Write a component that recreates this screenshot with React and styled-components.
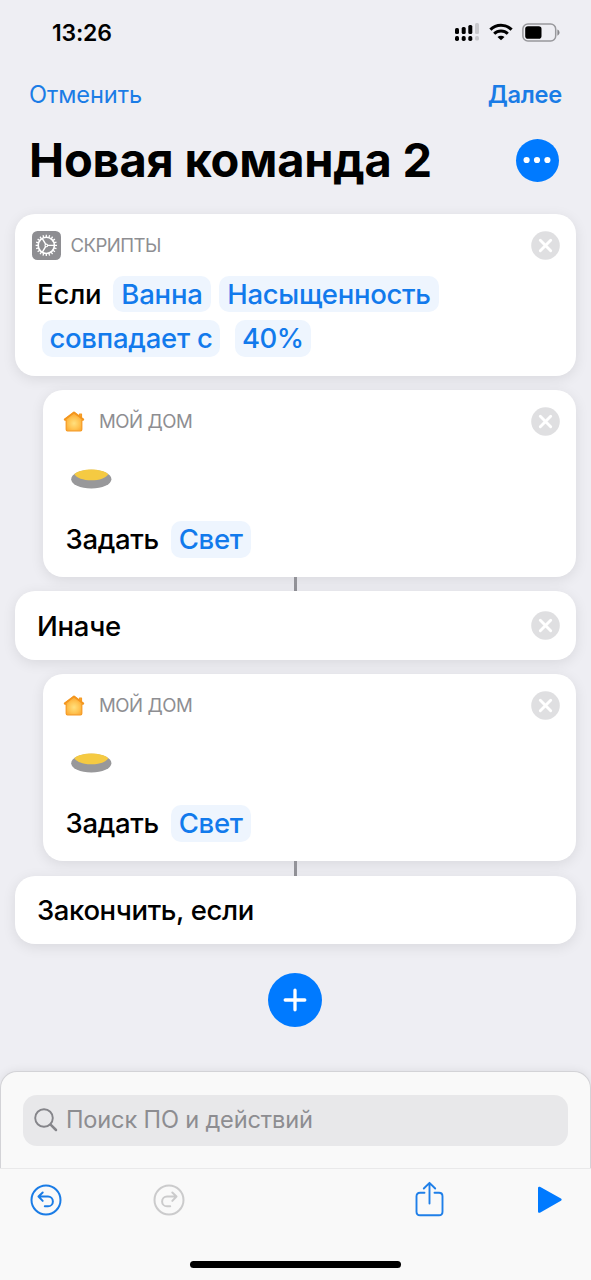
import React from 'react';
import styled, { createGlobalStyle, ThemeProvider } from 'styled-components';

const theme = {
  colors: {
    background: '#eeeef3',
    card: '#ffffff',
    blue: '#007aff',
    link: '#1a7ce6',
    chip: '#eef5fe',
    chipText: '#127aec',
    label: '#8e8e92',
    line: '#939399',
    panel: '#f9f9f9',
    search: '#e8e8ea',
    placeholder: '#8d8d91',
    disabled: '#cbcbcc',
  },
};

const GlobalStyle = createGlobalStyle`
  body {
    margin: 0;
    background-color: #eeeef3;
    font-family: Inter, "Liberation Sans", sans-serif;
    overflow: hidden;
  }
`;

const Screen = styled.div`
  display: flex;
  flex-direction: column;
  width: 591px;
  height: 1280px;
  background-color: ${props => props.theme.colors.background};
  overflow: hidden;
`;

const StatusBar = styled.header`
  display: flex;
  justify-content: space-between;
  align-items: center;
  height: 66px;
  padding: 0 31px 0 52px;
  box-sizing: border-box;
`;

const Text = styled.span`
  display: block;
  padding-top: ${props => props.$drop || 0}px;
  font-size: ${props => props.$size}px;
  font-weight: ${props => props.$weight || 400};
  letter-spacing: ${props => props.$spacing || 0}px;
  color: ${props => props.$color || '#000'};
  line-height: 1.2;
  white-space: nowrap;
`;

const StatusIcons = styled.div`
  display: flex;
  align-items: center;
  gap: 9px;
  padding-bottom: 2px;
`;

const NavBar = styled.nav`
  display: flex;
  justify-content: space-between;
  align-items: center;
  height: 58px;
  padding: 0 29px 0 29px;
`;

const TitleRow = styled.div`
  display: flex;
  justify-content: space-between;
  align-items: center;
  height: 72px;
  padding: 0 32.5px 0 29px;
`;

const Title = styled.h1`
  margin: 0;
  font-size: 47px;
  font-weight: 700;
  letter-spacing: -0.2px;
  line-height: 1.2;
  white-space: nowrap;
`;

const RoundButton = styled.button`
  display: flex;
  align-items: center;
  justify-content: center;
  width: ${props => props.$size}px;
  height: ${props => props.$size}px;
  flex-shrink: 0;
  padding: 0;
  border: none;
  border-radius: 50%;
  background-color: ${props => props.theme.colors.blue};
`;

const Flow = styled.main`
  display: flex;
  flex-direction: column;
  flex: 1;
  padding: 18px 15px 0;
`;

const Card = styled.section`
  display: flex;
  flex-direction: column;
  justify-content: ${props => (props.$single ? 'center' : 'flex-start')};
  height: ${props => props.$height}px;
  margin-left: ${props => (props.$nested ? 28 : 0)}px;
  padding: ${props => (props.$single ? '0 16.5px 0 22px' : '17px 16.5px 0')};
  box-sizing: border-box;
  border-radius: 20px;
  background-color: ${props => props.theme.colors.card};
  box-shadow: 0 3px 14px rgba(0, 0, 0, 0.09);
`;

const CardHeader = styled.div`
  display: flex;
  align-items: center;
  gap: 10px;
  height: 29px;
`;

const CloseButton = styled.button`
  display: flex;
  margin-left: auto;
  padding: 0;
  border: none;
  background: none;
`;

const Sentence = styled.div`
  display: flex;
  align-items: center;
  height: 36.5px;
  margin-top: ${props => props.$top}px;
  padding-left: ${props => props.$left}px;
`;

const Chip = styled.span`
  display: flex;
  align-items: center;
  justify-content: center;
  width: ${props => props.$width}px;
  height: 36.5px;
  margin-left: ${props => props.$gap || 0}px;
  border-radius: 10px;
  background-color: ${props => props.theme.colors.chip};
`;

const BulbRow = styled.div`
  display: flex;
  margin: 32.5px 0 0 11.5px;
`;

const Gap = styled.div`
  display: flex;
  justify-content: center;
  height: ${props => props.$height || 14}px;
`;

const Connector = styled.div`
  width: 3px;
  background-color: ${props => props.theme.colors.line};
`;

const AddRow = styled.div`
  display: flex;
  justify-content: center;
  margin-top: 29px;
  padding-right: 1px;
`;

const BottomPanel = styled.div`
  height: 97px;
  padding: 22.5px 22.5px 0 22px;
  box-sizing: border-box;
  border: 1px solid #d3d3d7;
  border-bottom: none;
  border-radius: 17px 17px 0 0;
  background-color: ${props => props.theme.colors.panel};
  box-shadow: 0 0 10px rgba(0, 0, 0, 0.08);
`;

const SearchField = styled.div`
  display: flex;
  align-items: center;
  gap: 8px;
  height: 51px;
  padding-left: 11px;
  border-radius: 14px;
  background-color: ${props => props.theme.colors.search};
`;

const Toolbar = styled.footer`
  display: flex;
  flex-direction: column;
  justify-content: space-between;
  align-items: center;
  height: 112px;
  padding-bottom: 12px;
  box-sizing: border-box;
  border-top: 1px solid #e9e9ea;
  background-color: ${props => props.theme.colors.panel};
  z-index: 1;
`;

const Tools = styled.div`
  display: grid;
  grid-template-columns: 123px 262px 122px 24px;
  align-items: center;
  width: 531px;
  height: 62px;
`;

const HomeIndicator = styled.div`
  width: 211px;
  height: 7px;
  border-radius: 4px;
  background-color: #000;
`;

const SignalIcon = () => (
  <svg width="26" height="18" viewBox="0 0 26 18">
    <rect x="1" y="5" width="4" height="6" rx="1.5" />
    <rect x="7.7" y="4" width="4" height="7" rx="1.5" />
    <rect x="14.3" y="2" width="4" height="9" rx="1.5" />
    <rect x="21" y="0" width="4" height="11" rx="1.5" fill="#c9c9cd" />
    <rect x="1" y="13" width="4" height="5" rx="1.7" />
    <rect x="7.7" y="13" width="4" height="5" rx="1.7" />
    <rect x="14.3" y="13" width="4" height="5" rx="1.7" />
    <rect x="21" y="13" width="4" height="4.6" rx="1.7" fill="#c9c9cd" />
  </svg>
);

const WifiIcon = () => (
  <svg width="24" height="18" viewBox="0 0 24 18" fill="none" stroke="#000" strokeWidth="3">
    <path d="M1.4 6.6a15 15 0 0 1 21.2 0" />
    <path d="M5.2 10.8a9.7 9.7 0 0 1 13.6 0" />
    <path d="M12 17.2l-3.5-3.1a5 5 0 0 1 7 0z" fill="#000" stroke="none" />
  </svg>
);

const BatteryIcon = () => (
  <svg width="38" height="19" viewBox="0 0 38 19">
    <rect x="0.9" y="1" width="32.8" height="17" rx="5" fill="none" stroke="#98989c" strokeWidth="1.5" />
    <rect x="3.2" y="3.3" width="16.3" height="12.4" rx="2.8" />
    <path d="M35.4 6.4c2.8 1.1 2.8 5.2 0 6.3z" fill="#88888c" />
  </svg>
);

const DotsIcon = () => (
  <svg width="30" height="8" viewBox="0 0 30 8" fill="#fff">
    <circle cx="4.6" cy="4" r="3.1" />
    <circle cx="15" cy="4" r="3.1" />
    <circle cx="25.4" cy="4" r="3.1" />
  </svg>
);

const teeth = Array.from({ length: 20 }, (_, i) => i * 18);

const GearIcon = () => (
  <svg width="29" height="29" viewBox="0 0 29 29">
    <rect width="29" height="29" rx="5.5" fill="#8e8e92" />
    <g stroke="#fff" fill="none">
      <circle cx="14.3" cy="14.4" r="8.1" strokeWidth="1.6" />
      {teeth.map(angle => (
        <path
          key={angle}
          d="M14.3 6.2V3.7"
          strokeWidth="1.3"
          transform={`rotate(${angle} 14.3 14.4)`}
        />
      ))}
      <circle cx="14.3" cy="14.4" r="1.3" strokeWidth="1.1" />
      <path d="M15.6 14.4h6.8M13.6 13.2L10.2 7.4M13.6 15.6l-3.4 5.8" strokeWidth="1.4" />
    </g>
  </svg>
);

const HouseIcon = () => (
  <svg width="22" height="21" viewBox="0 0 22 21">
    <defs>
      <radialGradient id="house" cx="0.5" cy="0.6" r="0.55">
        <stop offset="0" stopColor="#ffe07e" />
        <stop offset="0.55" stopColor="#ffc452" />
        <stop offset="1" stopColor="#fba52f" />
      </radialGradient>
    </defs>
    <path
      d="M11 1.200L2 8.200v1h1.200v9.300q0 1.300 1.300 1.300h13q1.300 0 1.300-1.300V9.200H20v-1l-1.500-1.200V3.200h-2v2.200z"
      fill="url(#house)"
      stroke="#f59a22"
      strokeWidth="1.200"
      strokeLinejoin="round"
    />
    <path d="M1.600 8.500L11 1.500l9.400 7" fill="none" stroke="#f3961f" strokeWidth="1.600" strokeLinecap="round" strokeLinejoin="round" />
  </svg>
);

const CloseIcon = () => (
  <svg width="29" height="29" viewBox="0 0 29 29">
    <circle cx="14.5" cy="14.5" r="14.3" fill="#dfdfe1" />
    <path d="M9.3 9.300l10.400 10.400M19.700 9.300L9.300 19.700" stroke="#fff" strokeWidth="2.9" strokeLinecap="round" />
  </svg>
);

const BulbIcon = () => (
  <svg width="41" height="20" viewBox="0 0 41 20">
    <ellipse cx="20.3" cy="10.2" rx="20.1" ry="9.4" fill="#98989a" />
    <path d="M3.3 5C7 2 13 .5 20.3 .5S33.600 2 37.300 5.200C35 9 28.500 11.300 20.300 11.300S5.600 9 3.300 5z" fill="#f5ca42" />
  </svg>
);

const PlusIcon = () => (
  <svg width="26" height="26" viewBox="0 0 26 26" stroke="#fff" strokeWidth="3.3" strokeLinecap="round">
    <path d="M13 3.200v19.600M3.200 13h19.600" />
  </svg>
);

const SearchIcon = () => (
  <svg width="24" height="24" viewBox="0 0 24 24" fill="none" stroke="#85858a" strokeLinecap="round">
    <circle cx="10" cy="10" r="8.8" strokeWidth="1.9" />
    <path d="M16.600 16.600l5.400 5.400" strokeWidth="2.5" />
  </svg>
);

const UndoIcon = ({ color, flipped }) => (
  <svg width="32" height="32" viewBox="0 0 32 32">
    <g
      fill="none"
      stroke={color}
      strokeWidth="2"
      strokeLinecap="round"
      strokeLinejoin="round"
      transform={flipped ? 'matrix(-1 0 0 1 32 0)' : undefined}
    >
      <circle cx="16" cy="16" r="14.5" />
      <path d="M12.700 8.500L8.500 12.500l4.200 4.400M8.900 12.500h9.100a4.900 4.900 0 0 1 0 9.800h-3.200" />
    </g>
  </svg>
);

const ShareIcon = () => (
  <svg width="29" height="38" viewBox="0 0 29 38" fill="none" stroke="#1f7fe8" strokeWidth="1.9" strokeLinecap="round" strokeLinejoin="round">
    <path d="M9.500 11.700H5q-3.500 0-3.500 3.500v15.600q0 3.500 3.500 3.500h19q3.500 0 3.500-3.500V15.200q0-3.500-3.500-3.500h-4.500" />
    <path d="M14.500 22.500V2M8.800 7.500l5.700-5.700 5.700 5.700" />
  </svg>
);

const PlayIcon = () => (
  <svg width="25" height="28" viewBox="0 0 25 28">
    <path d="M2.300 2L23.300 13.700 2.300 25.500z" fill="#007aff" stroke="#007aff" strokeWidth="2.6" strokeLinejoin="round" />
  </svg>
);

const Close = () => (
  <CloseButton aria-label="Удалить">
    <CloseIcon />
  </CloseButton>
);

const ChipLabel = ({ width, gap, spacing, children }) => (
  <Chip $width={width} $gap={gap}>
    <Text $size={27.5} $weight={500} $spacing={spacing} $drop={1} $color={theme.colors.chipText}>
      {children}
    </Text>
  </Chip>
);

const HomeLabel = styled.div`
  display: flex;
  align-items: center;
  gap: 14px;
  padding-left: 3.5px;
`;

const HomeCard = () => (
  <Card $nested $height={187}>
    <CardHeader>
      <HomeLabel>
        <HouseIcon />
        <Text $size={18.6} $spacing={-0.45} $color={theme.colors.label}>МОЙ ДОМ</Text>
      </HomeLabel>
      <Close />
    </CardHeader>
    <BulbRow>
      <BulbIcon />
    </BulbRow>
    <Sentence $top={32.5} $left={6}>
      <Text $size={27.5} $weight={500} $spacing={-0.35} $drop={1}>Задать</Text>
      <ChipLabel width={80} gap={12} spacing={-0.3}>Свет</ChipLabel>
    </Sentence>
  </Card>
);

const App = () => (
  <ThemeProvider theme={theme}>
    <GlobalStyle />
    <Screen>
      <StatusBar>
        <Text $size={23} $weight={600} $spacing={-0.2} $drop={1}>13:26</Text>
        <StatusIcons>
          <SignalIcon />
          <WifiIcon />
          <BatteryIcon />
        </StatusIcons>
      </StatusBar>
      <NavBar>
        <Text $size={23.6} $spacing={-0.1} $color={theme.colors.link}>Отменить</Text>
        <Text $size={23.6} $weight={600} $spacing={-0.25} $color={theme.colors.link}>Далее</Text>
      </NavBar>
      <TitleRow>
        <Title>Новая команда 2</Title>
        <RoundButton $size={43}>
          <DotsIcon />
        </RoundButton>
      </TitleRow>

      <Flow>
        <Card $height={162}>
          <CardHeader>
            <GearIcon />
            <Text $size={18.6} $spacing={-0.55} $color={theme.colors.label}>СКРИПТЫ</Text>
            <Close />
          </CardHeader>
          <Sentence $top={15.5} $left={5.5}>
            <Text $size={27.5} $weight={500} $spacing={-0.15} $drop={1}>Если</Text>
            <ChipLabel width={98} gap={11.5} spacing={-0.2}>Ванна</ChipLabel>
            <ChipLabel width={220} gap={8} spacing={-0.3}>Насыщенность</ChipLabel>
          </Sentence>
          <Sentence $top={8} $left={10.5}>
            <ChipLabel width={178} spacing={-0.25}>совпадает с</ChipLabel>
            <ChipLabel width={76.5} gap={14.5} spacing={-0.5}>40%</ChipLabel>
          </Sentence>
        </Card>
        <Gap />
        <HomeCard />
        <Gap>
          <Connector />
        </Gap>
        <Card $single $height={69}>
          <CardHeader>
            <Text $size={27.5} $weight={500} $spacing={-0.25} $drop={1}>Иначе</Text>
            <Close />
          </CardHeader>
        </Card>
        <Gap />
        <HomeCard />
        <Gap $height={15}>
          <Connector />
        </Gap>
        <Card $single $height={68}>
          <Text $size={27.5} $weight={500} $spacing={-0.38} $drop={1}>Закончить, если</Text>
        </Card>
        <AddRow>
          <RoundButton $size={54}>
            <PlusIcon />
          </RoundButton>
        </AddRow>
      </Flow>

      <BottomPanel>
        <SearchField>
          <SearchIcon />
          <Text $size={23.6} $spacing={-0.17} $drop={1} $color={theme.colors.placeholder}>Поиск ПО и действий</Text>
        </SearchField>
      </BottomPanel>
      <Toolbar>
        <Tools>
          <UndoIcon color="#1a7ce6" />
          <UndoIcon color={theme.colors.disabled} flipped />
          <ShareIcon />
          <PlayIcon />
        </Tools>
        <HomeIndicator />
      </Toolbar>
    </Screen>
  </ThemeProvider>
);

export default App;
